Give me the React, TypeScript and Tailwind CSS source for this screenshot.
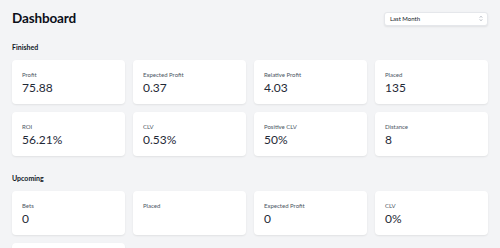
import React from "react";

type Stat = { label: string; value: string };

const finished: Stat[] = [
  { label: "Profit", value: "75.88" },
  { label: "Expected Profit", value: "0.37" },
  { label: "Relative Profit", value: "4.03" },
  { label: "Placed", value: "135" },
  { label: "ROI", value: "56.21%" },
  { label: "CLV", value: "0.53%" },
  { label: "Positive CLV", value: "50%" },
  { label: "Distance", value: "8" },
];

const upcoming: Stat[] = [
  { label: "Bets", value: "0" },
  { label: "Placed", value: "" },
  { label: "Expected Profit", value: "0" },
  { label: "CLV", value: "0%" },
  { label: "", value: "" },
];

function Card({ s }: { s: Stat }) {
  return (
    <div className="bg-white rounded-[4px] shadow-[0_1px_2px_rgba(0,0,0,0.08)] px-[10px] pt-[10px] pb-[10px] h-[44px]">
      <div className="text-[6px] leading-[9px] text-[#4b5563]">{s.label}</div>
      <div className="text-[12px] leading-[15px] mt-[1px] text-[#1f2937]">{s.value}</div>
    </div>
  );
}

function Section({ title, items }: { title: string; items: Stat[] }) {
  return (
    <div>
      <div className="text-[7px] leading-[10px] font-bold text-[#111827] mb-[8px]">{title}</div>
      <div className="grid grid-cols-4 gap-[8px]">
        {items.map((s, i) => (
          <Card key={i} s={s} />
        ))}
      </div>
    </div>
  );
}

export default function App() {
  return (
    <div
      className="min-h-[248px] bg-[#f3f4f6] px-[12px] pt-[8px] pb-[12px]"
      style={{ fontFamily: "Lato, 'Noto Sans', sans-serif" }}
    >
      <div className="flex items-center justify-between h-[20px]">
        <h1 className="text-[13.5px] leading-[20px] font-bold tracking-[-0.01em] text-[#0b0f19]">Dashboard</h1>
        <div className="w-[104px] h-[14px] mt-[1px] bg-white rounded-[3px] shadow-[0_1px_2px_rgba(0,0,0,0.08)] border border-[#e5e7eb] flex items-center justify-between pl-[5px] pr-[4px]">
          <span className="text-[6px] leading-[8px] text-[#111827]">Last Month</span>
          <svg width="4" height="7" viewBox="0 0 4 7" fill="none" stroke="#9ca3af" strokeWidth="0.8">
            <path d="M0.8 2.6 L2 1.3 L3.2 2.6" />
            <path d="M0.8 4.4 L2 5.7 L3.2 4.4" />
          </svg>
        </div>
      </div>
      <div className="mt-[14px]">
        <Section title="Finished" items={finished} />
      </div>
      <div className="mt-[17px]">
        <Section title="Upcoming" items={upcoming} />
      </div>
    </div>
  );
}
